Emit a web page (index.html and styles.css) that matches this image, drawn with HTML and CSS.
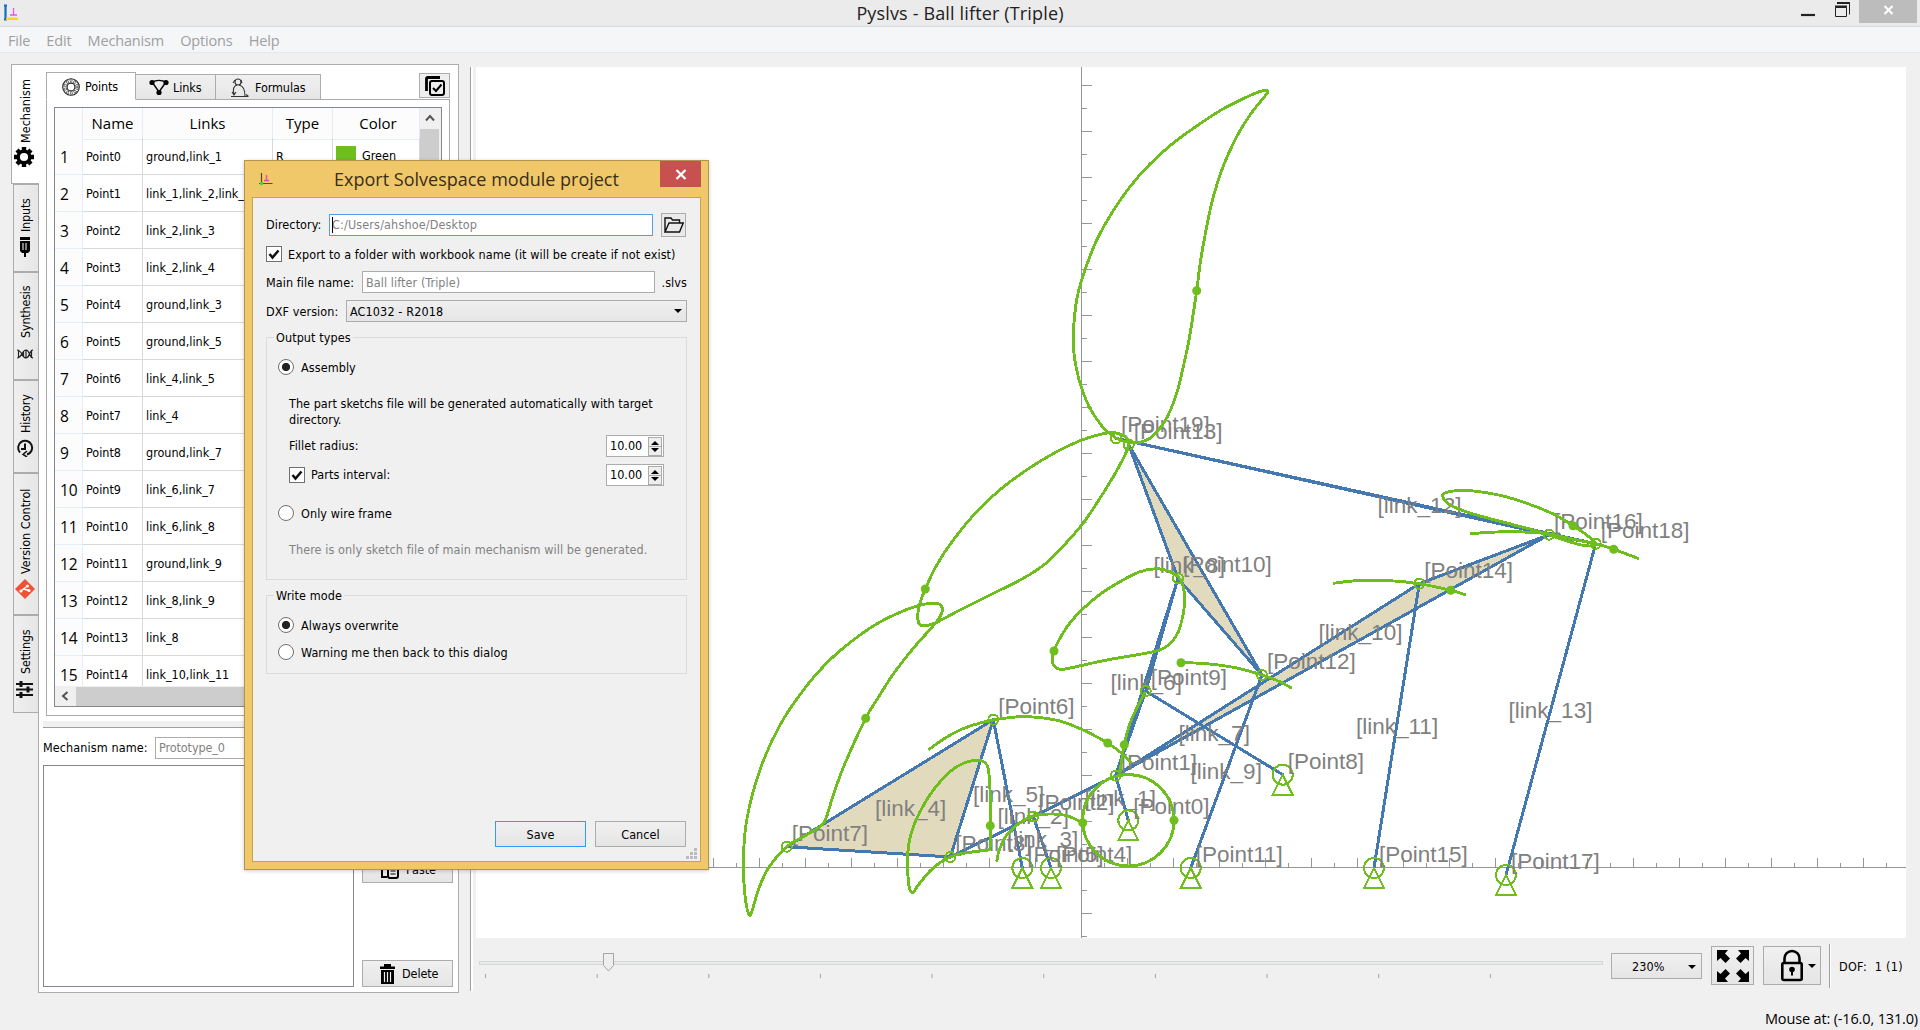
FILE: index.html
```html
<!DOCTYPE html>
<html lang="en">
<head>
<meta charset="utf-8">
<title>Pyslvs - Ball lifter (Triple)</title>
<link rel="stylesheet" href="styles.css">
</head>
<body>
<div class="window">
  <header class="titlebar">
    <svg class="app-icon" width="16" height="18" viewBox="0 0 16 18"><path d="M1 1.500H4M2.500 1V15M1 15.500H4" stroke="#0f6fc0" stroke-width="2.200" fill="none"/><path d="M3 14.800H15" stroke="#ffd21c" stroke-width="2.400"/><path d="M7 11H14M10.500 4V11" stroke="#e05be0" stroke-width="1.300"/></svg>
    <span class="title">Pyslvs - Ball lifter (Triple)</span>
    <div class="win-buttons">
      <svg width="62" height="24" viewBox="0 0 62 24"><path d="M4 15H18" stroke="#222" stroke-width="2.200"/><path d="M38.500 7.500H49.500V16.500H38.500Z" fill="none" stroke="#222"/><path d="M38 6.500H50M40 3H53" stroke="#222" stroke-width="2"/><path d="M52.500 3V14.500" stroke="#222"/></svg>
      <span class="win-close"><svg width="11" height="10" viewBox="0 0 11 10"><path d="M1.500 1L9.500 9M9.500 1L1.500 9" stroke="#fff" stroke-width="2"/></svg></span>
    </div>
  </header>
  <nav class="menubar"><span>File</span><span>Edit</span><span>Mechanism</span><span>Options</span><span>Help</span></nav>

  <main class="main">
    <div class="side-tabs">
      <div class="vtab active t-mech"><svg width="20" height="20" viewBox="-10 -10 20 20"><circle r="5.800" fill="none" stroke="#000" stroke-width="3.400"/><path d="M0-10V-6M0 6V10M-10 0H-6M6 0H10M-7-7L-4.500-4.500M7 7L4.500 4.500M-7 7L-4.500 4.500M7-7L4.500-4.500" stroke="#000" stroke-width="4.400"/></svg><span>Mechanism</span></div>
      <div class="vtab t-inputs"><svg width="12" height="20" viewBox="0 0 12 20"><path d="M1 0H11V3H1ZM1 4H11V14L9 16H7V20H5V16H3L1 14Z"/><path d="M4 6V13M7 6V13" stroke="#fff"/></svg><span>Inputs</span></div>
      <div class="vtab t-syn"><svg width="16" height="10" viewBox="0 0 16 10" fill="none" stroke="#222" stroke-width="1.200"><path d="M0 1C5 1 5 9 9 9S12 1 16 1M0 9C5 9 5 1 9 1S12 9 16 9M1.500 1V9M6.500 2V8M9 1V9M14.500 1V9"/></svg><span>Synthesis</span></div>
      <div class="vtab t-hist"><svg width="18" height="18" viewBox="0 0 18 18" fill="none" stroke="#111" stroke-width="2"><path d="M4 13.500A7 7 0 1 1 11 15.500"/><path d="M9 4.500V10H5"/><path d="M11 12L7 15.500L11 18" stroke-width="1.500"/></svg><span>History</span></div>
      <div class="vtab t-vc"><svg width="20" height="20" viewBox="0 0 20 20"><path d="M10 0L20 10L10 20L0 10Z" fill="#f05133"/><path d="M5 12.500L12.500 7M8.500 10L14 11.500" stroke="#fff" stroke-width="1.400"/><circle cx="6" cy="12" r="1.600" fill="#fff"/><circle cx="12.500" cy="7" r="1.500" fill="#fff"/><circle cx="14" cy="11.500" r="1.500" fill="#fff"/></svg><span>Version Control</span></div>
      <div class="vtab t-set"><svg width="17" height="17" viewBox="0 0 17 17"><path d="M0 3H17M0 8.500H17M0 14H17" stroke="#111" stroke-width="2.200"/><path d="M5 0V6M12 5.500V11.500M5 11V17" stroke="#111" stroke-width="3"/></svg><span>Settings</span></div>
    </div>

    <section class="page">
      <div class="tab-row">
        <div class="tab active tp"><svg width="18" height="18" viewBox="-9 -9 18 18" fill="none" stroke="#222"><circle r="8.300" stroke-width="1.100"/><circle r="3.900" stroke-width="1.100"/><circle r="6.100" stroke-width="3" stroke-dasharray="2.600 1.230" stroke="#555"/><circle r="6.100" stroke-width="1.400" stroke-dasharray="1.400 2.430" stroke="#fff" stroke-dashoffset="-.6"/></svg>Points</div>
        <div class="tab tl"><svg width="20" height="17" viewBox="0 0 20 17"><path d="M3 3C7 1 13 1 17 3L10 13Z" fill="none" stroke="#000" stroke-width="1.400"/><circle cx="3" cy="3.500" r="2.600"/><circle cx="17" cy="3.500" r="2.600"/><circle cx="10" cy="13.500" r="2.600"/></svg>Links</div>
        <div class="tab tf"><svg width="18" height="20" viewBox="0 0 18 20" fill="none" stroke="#333" stroke-width="1.100"><circle cx="7" cy="4" r="3"/><path d="M4 2L2 5M10 2L11 5M6 7C2 8 2 13 3 17M8 7C13 8 14 13 14 18M0 18.500H17M15 16.500L17.500 18.500M1 14L3 17L5 14"/></svg>Formulas</div>
        <div class="corner"><svg width="20" height="20" viewBox="0 0 20 20" fill="none" stroke="#000"><path d="M1.500 15V3Q1.500 1.500 3 1.500H15" stroke-width="2.800"/><rect x="5" y="5" width="14" height="14" rx="2" stroke-width="2"/><path d="M8 12L11 15L16.500 8.500" stroke-width="2"/></svg></div>
      </div>
      <div class="tab-page">
        <div class="table">
          <div class="thead"><span></span><span>Name</span><span>Links</span><span>Type</span><span>Color</span></div>
          <div class="tbody" id="rows"></div>
          <div class="hscroll"><svg width="8" height="10" viewBox="0 0 8 10"><path d="M6.500 1L2 5L6.500 9" fill="none" stroke="#555" stroke-width="2"/></svg><i></i></div>
          <div class="vscroll"><svg width="10" height="8" viewBox="0 0 10 8"><path d="M1 6.500L5 2L9 6.500" fill="none" stroke="#555" stroke-width="2"/></svg><i></i></div>
        </div>
      </div>
      <div class="hsplit"></div>
      <div class="name-row"><label>Mechanism name:</label><div class="edit">Prototype_0</div></div>
      <div class="bottom-row">
        <div class="listbox"></div>
        <div class="side-buttons">
          <div class="btn"><svg width="19" height="18" viewBox="0 0 19 18" fill="none" stroke="#000" stroke-width="2"><path d="M7 16H2V3H13V5"/><rect x="8" y="6" width="10" height="11" rx="2"/><path d="M10.500 10H15.500M10.500 13H15.500" stroke-width="1.200"/></svg>Paste</div>
          <div class="btn"><svg width="15" height="20" viewBox="0 0 15 20"><path d="M0 2.500H15V5H0ZM4 0H11V3H4ZM1 6H14V20H1Z"/><path d="M4.500 8V18M7.500 8V18M10.500 8V18" stroke="#eee" stroke-width="1.200"/></svg>Delete</div>
        </div>
      </div>
    </section>

    <div class="vsplit"></div>

    <section class="view">
      <svg id="canvas" class="canvas" width="1430" height="871" viewBox="476 67 1430 871"></svg>
      <div class="controls">
        <svg class="slider" width="1128" height="34" viewBox="476 948 1128 34"><rect x="479.500" y="960.500" width="1123" height="3" fill="#e7eaea" stroke="#d6d6d6"/><path d="M485 975H1600" stroke="#a5a298" stroke-width="4" stroke-dasharray="1 110.650"/><path d="M603.500 952.500H613.500V964.500L608.500 970L603.500 964.500Z" fill="#eee" stroke="#a5a5a5"/></svg>
        <div class="zoom-btn"><span>230%</span><i class="arrow"></i></div>
        <div class="tool full"><svg width="32" height="32" viewBox="0 0 32 32"><g id="q"><path d="M0 0H11L8 3.500L13 8.500L8.500 13L3.500 8L0 11Z"/></g><use href="#q" transform="translate(32 0) scale(-1 1)"/><use href="#q" transform="translate(0 32) scale(1 -1)"/><use href="#q" transform="translate(32 32) scale(-1 -1)"/></svg></div>
        <div class="tool lock"><svg width="24" height="33" viewBox="0 0 24 33"><path d="M4.500 14V9.500A7.500 7.500 0 0 1 19.500 9.500V14" fill="none" stroke="#000" stroke-width="2.600"/><rect x="2.300" y="14" width="19.400" height="17" rx="1.500" fill="none" stroke="#000" stroke-width="2.600"/><circle cx="12" cy="20.500" r="2.800"/><path d="M12 21V26.500" stroke="#000" stroke-width="2"/></svg><i class="arrow"></i></div>
        <div class="vline"></div>
        <span class="dof">DOF:&nbsp; 1 (1)</span>
      </div>
    </section>
  </main>
  <footer class="status">Mouse at: (-16.0, 131.0)</footer>
</div>

<div class="dialog">
  <div class="dlg-title">
    <svg width="14" height="13" viewBox="0 0 14 13"><path d="M2.500 0V12M0 10.500H13.500" stroke="#5a4a20" stroke-width="1.200"/><path d="M5 7.500H10M7.500 2V7.500" stroke="#f03cc8" stroke-width="1.300"/><circle cx="2.500" cy="10.500" r="1.600" fill="#0f0"/></svg>
    <span>Export Solvespace module project</span>
    <div class="dlg-close"><svg width="12" height="11" viewBox="0 0 12 11"><path d="M1.500 1L10.500 10M10.500 1L1.500 10" stroke="#fff" stroke-width="2.200"/></svg></div>
  </div>
  <div class="client">
    <div class="row r-dir"><label>Directory:</label><div class="edit focus"><i class="caret"></i>C:/Users/ahshoe/Desktop</div><div class="folder"><svg width="20" height="16" viewBox="0 0 20 16" fill="none" stroke="#111" stroke-width="1.400"><path d="M1 15V1H7L8.500 3H15.500V6M1 15L5 6H19.200L15.500 15Z"/></svg></div></div>
    <div class="row r-chk"><i class="check"><svg width="12" height="11" viewBox="0 0 12 11"><path d="M1.500 5L4.500 8.500L10.500 1.500" fill="none" stroke="#111" stroke-width="2.500"/></svg></i><span class="wide">Export to a folder with workbook name (it will be create if not exist)</span></div>
    <div class="row r-file"><label>Main file name:</label><div class="edit">Ball lifter (Triple)</div><span>.slvs</span></div>
    <div class="row r-dxf"><label>DXF version:</label><div class="combo"><span>AC1032 - R2018</span><i class="arrow"></i></div></div>
    <div class="group g1">
      <span class="legend">Output types</span>
      <div class="row radio-row"><i class="radio on"></i><span>Assembly</span></div>
      <p class="para">The part sketchs file will be generated automatically with target<br>directory.</p>
      <div class="row spin-row"><span>Fillet radius:</span><div class="spin">10.00<i></i></div></div>
      <div class="row spin-row second"><i class="check"><svg width="12" height="11" viewBox="0 0 12 11"><path d="M1.500 5L4.500 8.500L10.500 1.500" fill="none" stroke="#111" stroke-width="2.500"/></svg></i><span>Parts interval:</span><div class="spin">10.00<i></i></div></div>
      <div class="row radio-row wire"><i class="radio"></i><span>Only wire frame</span></div>
      <p class="hint wide">There is only sketch file of main mechanism will be generated.</p>
    </div>
    <div class="group g2">
      <span class="legend">Write mode</span>
      <div class="row radio-row"><i class="radio on"></i><span>Always overwrite</span></div>
      <div class="row radio-row w2"><i class="radio"></i><span>Warning me then back to this dialog</span></div>
    </div>
    <div class="actions"><div class="push default">Save</div><div class="push">Cancel</div></div>
    <svg class="grip" width="11" height="11" viewBox="0 0 11 11" fill="#bcbcbc"><path d="M8 0h3v3h-3zM4 4h3v3h-3zM8 4h3v3h-3zM0 8h3v3h-3zM4 8h3v3h-3zM8 8h3v3h-3z"/></svg>
  </div>
</div>
<script src="main.js"></script>
</body>
</html>
```
FILE: styles.css
```css
* { box-sizing: border-box; }
body { margin: 0; width: 1920px; height: 1030px; overflow: hidden; background: #f0f0f0; color: #000; font: 12.5px/16px "DejaVu Sans Condensed", "DejaVu Sans", sans-serif; font-stretch: condensed; letter-spacing: -.1px; }
i { font-style: normal; display: block; flex: none; }
svg { display: block; flex: none; }
.window { width: 1920px; height: 1030px; display: flex; flex-direction: column; }

.titlebar { height: 27px; flex: none; background: #ebebeb; border-bottom: 1px solid #d8d8d8; display: flex; align-items: center; font: 18px/26px "Open Sans", sans-serif; letter-spacing: 0; color: #222; }
.app-icon { margin-left: 3px; }
.title { flex: 1; text-align: center; padding-left: 104px; letter-spacing: .15px; }
.win-buttons { display: flex; flex: none; height: 100%; align-items: flex-start; width: 123px; }
.win-close { width: 58px; height: 23px; background: #bcbcbc; display: flex; align-items: center; justify-content: center; padding-bottom: 4px; }
.menubar { height: 26px; flex: none; background: #f5f6f8; border-bottom: 1px solid #e6e7ea; display: flex; gap: 16px; padding-left: 8px; font: 14.500px/27px "Open Sans", sans-serif; letter-spacing: -.15px; color: #a0a0a0; }

.main { flex: 1; display: flex; padding: 11px 14px 0 11px; min-height: 0; }
.side-tabs { width: 27px; flex: none; display: flex; flex-direction: column; align-items: flex-end; }
.vtab { writing-mode: vertical-rl; transform: rotate(180deg); width: 25px; border: 1px solid #acacac; border-left: 0; background: linear-gradient(90deg, #e6e6e6, #efefef); display: flex; align-items: center; justify-content: flex-start; gap: 5px; flex: none; letter-spacing: -.2px; }
.vtab svg { transform: translateX(1px) rotate(180deg); }
.vtab.active { width: 28px; background: #fff; margin-right: -1px; z-index: 1; position: relative; border-left: 0; }
.t-mech { height: 120px; padding-top: 16px; gap: 4px; letter-spacing: 0; }
.t-inputs { height: 88px; padding-top: 14px; }
.t-syn { height: 108px; padding-top: 20px; gap: 11px; }
.t-hist { height: 93px; padding-top: 15px; gap: 6px; }
.t-vc { height: 142px; padding-top: 15px; gap: 5px; letter-spacing: 0; }
.t-set { height: 98px; padding-top: 14px; gap: 7px; }
.page { width: 421px; height: 929px; flex: none; background: #fff; border: 1px solid #acacac; display: flex; flex-direction: column; padding: 7px 5px 0 4px; }
.tab-row { display: flex; align-items: flex-end; height: 28px; margin-left: 3px; position: relative; z-index: 1; margin-bottom: -1px; flex: none; }
.tab { height: 26px; border: 1px solid #acacac; border-left: 0; background: linear-gradient(#f0f0f0, #e6e6e6); display: flex; align-items: center; flex: none; padding-top: 1px; }
.tab.active { height: 28px; background: #fff; border-left: 1px solid #acacac; border-bottom-color: #fff; }
.tp { width: 90px; padding-left: 15px; gap: 5px; }
.tl { width: 80px; padding-left: 13px; gap: 4px; }
.tf { width: 105px; padding-left: 15px; gap: 6px; }
.corner { width: 31px; height: 25px; border: 1px solid #acacac; background: #eee; margin-left: auto; margin-right: 3px; margin-bottom: 2px; display: flex; align-items: center; justify-content: center; }
.tab-page { height: 617px; width: 404px; flex: none; border: 1px solid #acacac; margin-left: 3px; padding: 7px; }
.table { width: 388px; height: 600px; border: 1px solid #828790; display: grid; grid-template: 30px 548px 20px / 1fr 21px; overflow: hidden; }
.thead { grid-area: 1/1; display: grid; grid-template-columns: 28px 60px 130px 60px 1fr; font: 15px/31px "Open Sans", sans-serif; letter-spacing: 0; background: #fcfcfc; text-align: center; }
.thead span { border-right: 1px solid #e4eef9; border-bottom: 1px solid #e4eef9; }
.thead span:last-child { padding-left: 4px; }
.tbody { grid-area: 2/1; overflow: hidden; letter-spacing: 0; }
.tr { display: grid; grid-template-columns: 28px 60px 130px 60px 1fr; height: 37px; line-height: 38px; }
.tr span { border-right: 1px solid #d8d8d8; border-bottom: 1px solid #d8d8d8; padding-left: 3px; white-space: nowrap; overflow: hidden; }
.tr span:first-child { font: 15.500px/39px "Open Sans", sans-serif; letter-spacing: 0; border-color: #e4eef9; background: #fcfcfc; padding-left: 5px; }
.tr .color { display: flex; align-items: center; gap: 6px; }
.tr .color i { width: 20px; height: 20px; background: #6ebe1e; }
.hscroll { grid-area: 3/1; background: #f0f0f0; display: flex; align-items: center; padding-left: 6px; }
.hscroll i { height: 19px; width: 200px; background: #cdcdcd; margin-left: 7px; }
.vscroll { grid-area: 1/2/4/3; background: #f0f0f0; display: flex; flex-direction: column; align-items: center; padding: 6px 2px 0 0; }
.vscroll i { width: 19px; height: 300px; background: #cdcdcd; margin-top: 7px; }
.hsplit { height: 7px; flex: none; margin-top: 5px; background: #f0f0f0; border-bottom: 1px solid #a0a0a0; }
.name-row { display: flex; align-items: center; margin-top: 9px; height: 22px; flex: none; }
.name-row label { width: 112px; flex: none; letter-spacing: .1px; }
.edit { border: 1px solid #acacac; background: #fff; color: #828282; height: 22px; line-height: 20px; padding-left: 3px; flex: 1; white-space: nowrap; }
.bottom-row { display: flex; gap: 8px; margin-top: 6px; height: 222px; flex: none; }
.listbox { width: 311px; border: 1px solid #828790; }
.side-buttons { display: flex; flex-direction: column; justify-content: space-between; padding: 91px 0 0; }
.btn { width: 91px; height: 27px; border: 1px solid #acacac; background: linear-gradient(#f0f0f0, #e5e5e5); display: flex; align-items: center; gap: 7px; padding-left: 17px; }
.vsplit { width: 3px; margin: 3px 3px 0 11px; height: 924px; background: #fff; border-left: 1px solid #a0a0a0; flex: none; }
.view { padding-top: 3px; width: 1430px; flex: none; }
.canvas { background: #fff; font: 22.500px "Liberation Sans", Arial, sans-serif; letter-spacing: 0; }
.controls { display: flex; margin-top: 6px; height: 44px; align-items: center; }
.slider { margin-right: 7px; }
.zoom-btn, .tool { border: 1px solid #acacac; background: linear-gradient(#f0f0f0, #e5e5e5); display: flex; align-items: center; flex: none; }
.zoom-btn { width: 91px; height: 26px; padding: 1px 5px 0 20px; justify-content: space-between; letter-spacing: .1px; }
.arrow { border: 4px solid transparent; border-top-color: #000; border-bottom: 0; }
.tool { height: 39px; margin-left: 9px; margin-top: -1px; }
.full { width: 43px; justify-content: center; }
.lock { width: 58px; padding-left: 16px; gap: 4px; }
.vline { width: 2px; height: 44px; border-left: 1px solid #a0a0a0; background: #fff; margin: 0 8px; }
.dof { white-space: nowrap; letter-spacing: .3px; padding-top: 1px; }
.status { height: 22px; flex: none; text-align: right; padding-right: 2px; font: 14.500px/22px "Open Sans", sans-serif; letter-spacing: -.15px; }

.dialog { position: absolute; left: 244px; top: 160px; width: 465px; height: 710px; background: #f0c869; border: 1px solid #b3954c; padding: 0 7px 7px; display: flex; flex-direction: column; box-shadow: 0 1px 4px rgba(0,0,0,.2); letter-spacing: .08px; }
.dlg-title { height: 36px; flex: none; display: flex; align-items: flex-start; color: #3a2e18; font: 18px/36px "Open Sans", sans-serif; letter-spacing: 0; }
.dlg-title > svg { margin: 12px 0 0 7px; }
.dlg-title span { flex: 1; text-align: center; padding-left: 20px; white-space: nowrap; }
.dlg-close { width: 41px; height: 26px; background: #c75050; display: flex; align-items: center; justify-content: center; }
.client { flex: 1; border: 1px solid #c9a24d; background: #f0f0f0; padding: 14px 13px 0; display: flex; flex-direction: column; position: relative; }
.row { display: flex; align-items: center; flex: none; white-space: nowrap; }
.r-dir { height: 25px; margin-right: 1px; }
.r-dir label { width: 63px; }
.r-dir .edit { margin-right: 8px; letter-spacing: .15px; }
.edit.focus { border-color: #569de5; position: relative; padding-left: 2px; }
.caret { position: absolute; left: 2px; top: 2px; width: 1px; height: 16px; background: #000; }
.folder { width: 25px; height: 24px; border: 1px solid #acacac; background: #eaeaea; display: flex; align-items: center; justify-content: center; }
.check { width: 16px; height: 16px; border: 1px solid #707070; background: #fff; padding: 2px 1px; }
.wide { letter-spacing: .09px; }
.para { letter-spacing: .04px; }
.r-chk { height: 16px; margin-top: 9px; gap: 6px; }
.r-chk .wide { padding-top: 1px; }
.r-file { height: 22px; margin-top: 9px; }
.r-file label { width: 96px; }
.r-file .edit { margin-right: 7px; line-height: 21px; }
.r-file span, .r-file label, .r-dxf label, .combo span { padding-top: 1px; }
.r-dxf { height: 22px; margin-top: 7px; }
.r-dxf label { width: 80px; }
.combo { flex: 1; height: 22px; border: 1px solid #acacac; background: linear-gradient(#f0f0f0, #e5e5e5); display: flex; align-items: center; justify-content: space-between; padding: 0 4px 0 3px; letter-spacing: .12px; }
.group { border: 1px solid #dcdcdc; flex: none; padding-left: 11px; }
.legend { display: table; background: #f0f0f0; padding: 0 2px; margin: -8px 0 0 -4px; }
.g1 { height: 243px; margin-top: 15px; }
.g2 { height: 79px; margin-top: 15px; }
.radio { width: 16px; height: 16px; border: 1px solid #707070; border-radius: 50%; background: #fff; }
.radio.on { background: radial-gradient(circle, #222 3.700px, #fff 4.500px); }
.radio-row { height: 16px; gap: 7px; margin-top: 13px; }
.radio-row span { padding-top: 1px; }
.group p { margin: 21px 0 0 11px; white-space: nowrap; }
.spin-row { margin: 7px 22px 0 11px; height: 22px; gap: 6px; }
.spin-row.second { margin-top: 7px; }
.spin { width: 58px; height: 22px; border: 1px solid #acacac; background: #fff; margin-left: auto; display: flex; align-items: center; justify-content: space-between; padding: 0 1px 0 3px; letter-spacing: 0; }
.spin i { width: 14px; height: 19px; border: 1px solid #acacac; background: linear-gradient(#acacac, #acacac) 0 50%/100% 1px no-repeat, #eee; position: relative; }
.spin i::before, .spin i::after { content: ""; position: absolute; left: 2px; border: 4px solid transparent; }
.spin i::before { top: 3px; border-bottom-color: #000; border-top: 0; }
.spin i::after { bottom: 3px; border-top-color: #000; border-bottom: 0; }
.radio-row.wire { margin-top: 19px; }
.group .hint { color: #828282; }
.radio-row.w2 { margin-top: 11px; }
.actions { display: flex; gap: 9px; justify-content: flex-end; margin: 147px 1px 0 0; }
.push { width: 91px; height: 26px; border: 1px solid #acacac; background: linear-gradient(#f0f0f0, #e5e5e5); text-align: center; line-height: 26px; }
.push.default { border-color: #3399ff; }
.grip { position: absolute; right: 3px; bottom: 2px; }
```
FILE: main.js
```js
const rows = ["ground,link_1", "link_1,link_2,link_10", "link_2,link_3", "link_2,link_4", "ground,link_3", "ground,link_5", "link_4,link_5", "link_4", "ground,link_7", "link_6,link_7", "link_6,link_8", "ground,link_9", "link_8,link_9", "link_8", "link_10,link_11"];
document.getElementById("rows").innerHTML = rows.map((l, i) =>
  `<div class="tr"><span>${i + 1}</span><span>Point${i}</span><span>${l}</span><span>R</span><span class="color"><i></i>Green</span></div>`).join("");

const GREEN = "#6ebe1e", BLUE = "#4478b0";
const P = [[1128.3,820.3],[1115.7,775.7],[1033.3,816.5],[950.3,857],[1051,868],[1022.3,868],[993.3,719.7],[786.7,846.7],[1282.7,774.7],[1145.7,691],[1178,578.3],[1190.7,868],[1262,675],[1128.7,444.7],[1419.3,583.7],[1374,868],[1549,534.7],[1506,875],[1595.7,543.7],[1116,438.3]];
const ground = [0, 4, 5, 8, 11, 15, 17];
const links = [[0,1],[1,2,3],[2,4],[3,6,7],[5,6],[1,9,10],[8,9],[10,12,13],[11,12],[1,14,16],[14,15],[19,16,18],[17,18]];
const linkLabels = [[1084.6,806],[997.6,823.7],[1007,847.3],[875,815.7],[973,801.7],[1110.6,689.7],[1178.6,740.7],[1153.6,573],[1190.6,779],[1318.6,639.7],[1356,733.7],[1377.6,513.3],[1508.6,717.7]];

// Point traces: [closed, marker, coordinates]
const traces = [
  [1, [1196.7,290.7], [1267.7,92.3,1265.3,90.3,1256.7,92.7,1240,100.3,1220,110.7,1196.7,126,1173.3,143,1150,164,1130,186.7,1113.3,210.7,1096.7,240,1085,270,1077.3,296.7,1073.7,326.7,1073.7,350,1076.7,370,1081.7,388.3,1090,408.3,1101.7,425.7,1110.7,434.3,1120,440,1130,442.7,1140,442.3,1150,438.3,1160,428.3,1168.3,415,1176.7,393.3,1183.3,366.7,1189.3,338.3,1193.3,313.3,1196.7,290.7,1200.7,260,1206.7,226.7,1213.3,196.7,1223.3,166,1236.7,136.7,1250,115,1261.7,100]],
  [1, [925.3,589], [1128.3,440,1120,434,1110,432.7,1096.7,435.3,1080,440.7,1056.7,451.7,1030,467.7,1001.7,488.3,976.7,511.7,953.3,540,936.7,565,925.3,589,920,603.3,917.7,616.7,920,624.7,926.7,625.7,936.7,622.3,963.3,608.3,990,595,1023.3,578.3,1046.7,562.7,1063.3,546,1081.7,525,1096.7,503.3,1113.3,476.7,1123.3,458.3,1128.3,446.7]],
  [1, [865.7,718.3], [941.7,606.7,938.3,603.7,930,603.3,916.7,606,900,612.3,880,622,860,635,833.3,656.7,807.3,685,780,725,759.3,771.7,746.7,820,743.3,860,744,883.3,746,903.3,749.3,915,752.3,910,758.3,890,768.3,868.3,786.7,846.7,803.3,836.7,820,826.7,826,818.3,833.3,795,845,763.3,865.7,718.3,876.7,700,893.3,674,913.3,648.3,933.3,625.7,940,616.7,942.3,610.7]],
  [1, [990.3,825.7], [976.7,760.3,963.3,763.3,950,771.7,933.3,790,920,811.7,910.7,835,907.3,860,908.3,880,910,890,913.3,892.3,918.3,885,930,871,940,862.7,950.3,857,963.3,853.3,980,851,989.3,849.3,990.3,840,990.3,825.7,990,790,988.3,769.3,985,762.7]],
  [0, [1107.7,743], [928.3,750,943.3,739.3,960,730,976.7,724,993.3,720,1020,716.7,1043.3,718,1063.3,722,1086.7,731.7,1107.7,743,1121.7,753.3,1131.7,763]],
  [0, [1082.7,822.7], [996.7,861.7,999.3,850,1006.7,835,1018.3,824,1033.3,816,1050,814,1066.7,815.7,1082.7,822.7]],
  [0, [1124.3,744.7], [1145.3,691.7,1136.7,708.3,1130,723.3,1124.3,744.7,1121.7,760,1120,772]],
  [1, [1054,651], [1178,576.7,1170,571.7,1156.7,568.7,1140,571.7,1120,581.7,1100,594.3,1081.7,610,1066.7,627.3,1054,651,1052.7,663.3,1060,669.3,1073.3,667.3,1106.7,660,1153.3,651.7,1168.3,645,1178.3,631.7,1183.3,613.3,1184.7,598.3,1182.7,585]],
  [0, [1181,662.7], [1181,662.7,1206.7,663.7,1236.7,668,1262,675,1280,681.7,1291.7,688.3]],
  [0, [1450.7,590.3], [1333.3,583.3,1356.7,580.7,1390,580.7,1419,583.7,1450.7,590.3,1465.7,595]],
  [0, [1613.7,549.3], [1470,533.7,1496.7,532,1523.3,532,1549,534,1573.3,539.3,1595.7,543.7,1613.7,549.3,1639,558.7]],
  [1, [1573,525.7], [1595.7,543.7,1586.7,535,1573,525.7,1553.3,514,1526.7,503.3,1500,495.3,1473.3,491,1453.3,491,1443.3,494.3,1445,500.7,1453.3,506.7,1473.3,514,1500,521.3,1533.3,530,1560,538.7,1580,544.7,1591.7,546]]
];

// Catmull-Rom spline through the samples
function smooth(flat, closed) {
  const p = [];
  for (let i = 0; i < flat.length; i += 2) p.push([flat[i], flat[i + 1]]);
  const n = p.length;
  const at = i => closed ? p[(i + n) % n] : p[Math.max(0, Math.min(n - 1, i))];
  let d = `M${p[0]}`;
  for (let i = 0; i < (closed ? n : n - 1); i++) {
    const [a, b, c, e] = [at(i - 1), at(i), at(i + 1), at(i + 2)];
    d += `C${b[0] + (c[0] - a[0]) / 6},${b[1] + (c[1] - a[1]) / 6} ${c[0] - (e[0] - b[0]) / 6},${c[1] - (e[1] - b[1]) / 6} ${c}`;
  }
  return d;
}

let s = `<g stroke="#969696" shape-rendering="crispEdges" fill="none"><path d="M476 867.5H1906M1081.5 67V938"/>
<path d="M483 862.5H1906" stroke-width="10" stroke-dasharray="1 45"/><path d="M483 865H1906" stroke-width="5" stroke-dasharray="1 22"/>
<path d="M1086.500 85V938" stroke-width="10" stroke-dasharray="1 45"/><path d="M1084 85V938" stroke-width="5" stroke-dasharray="1 22"/></g>`;
// Plates first, so the two-joint links stay visible over their fill
s += `<g stroke="${BLUE}" stroke-width="3" stroke-linejoin="round" shape-rendering="crispEdges">`;
for (const l of [...links].sort((a, b) => b.length - a.length)) s += `<path d="M${l.map(i => P[i]).join("L")}Z" fill="${l.length > 2 ? "#e2dabd" : "none"}"/>`;
s += `</g><g fill="#808080">`;
linkLabels.forEach(([x, y], i) => s += `<text x="${x}" y="${y}">[link_${i + 1}]</text>`);
s += `</g><g fill="none" stroke="${GREEN}" stroke-width="2" shape-rendering="crispEdges">`;
P.forEach(([x, y], i) => {
  s += ground.includes(i) ? `<circle cx="${x}" cy="${y}" r="10"/><path d="M${x} ${y}l10 20h-20Z"/>` : `<circle cx="${x}" cy="${y}" r="5"/>`;
});
s += `</g><g fill="#808080">`;
P.forEach(([x, y], i) => s += `<text x="${x + 5}" y="${y - 6.2}">[Point${i}]</text>`);
s += `</g><g fill="none" stroke="${GREEN}" stroke-width="2.9" shape-rendering="crispEdges"><circle cx="1128.300" cy="820.300" r="45.700"/>`;
for (const [closed, , pts] of traces) s += `<path d="${smooth(pts, closed)}"/>`;
s += `</g><g fill="${GREEN}"><circle cx="1174" cy="820.300" r="4.500"/>`;
for (const [, m] of traces) s += `<circle cx="${m[0]}" cy="${m[1]}" r="4.500"/>`;
document.getElementById("canvas").innerHTML = s + "</g>";
```
